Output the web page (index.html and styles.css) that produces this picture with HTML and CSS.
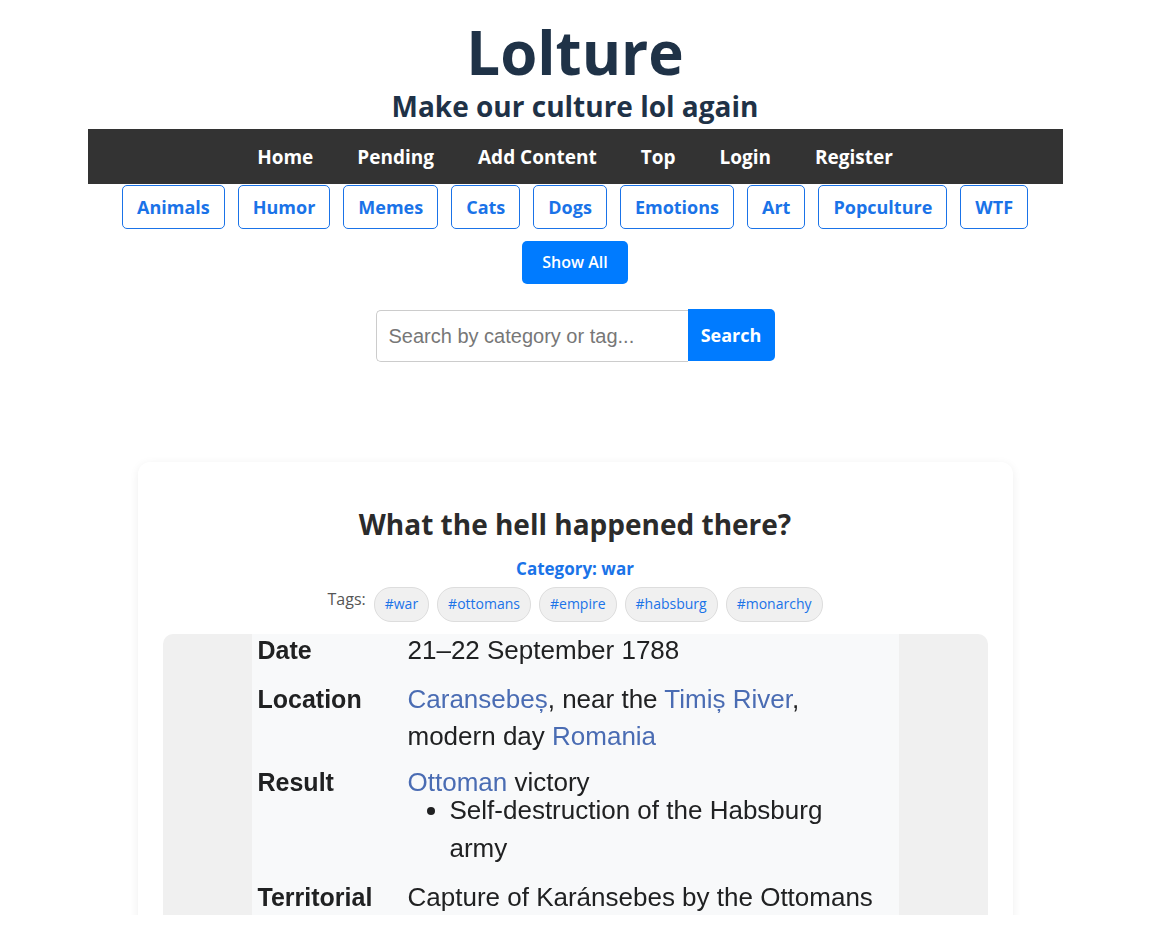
FILE: index.html
```html
<!DOCTYPE html>
<html lang="en">
<head>
<meta charset="utf-8">
<title>Lolture</title>
<link rel="stylesheet" href="styles.css">
</head>
<body>
<div class="page">
  <header class="site-header">
    <h1 class="logo">Lolture</h1>
    <h2 class="tagline">Make our culture lol again</h2>
  </header>
  <nav class="main-nav">
    <a href="#">Home</a>
    <a href="#">Pending</a>
    <a href="#">Add Content</a>
    <a href="#">Top</a>
    <a href="#">Login</a>
    <a href="#">Register</a>
  </nav>
  <div class="categories">
    <a class="cat-btn" href="#">Animals</a>
    <a class="cat-btn" href="#">Humor</a>
    <a class="cat-btn" href="#">Memes</a>
    <a class="cat-btn" href="#">Cats</a>
    <a class="cat-btn" href="#">Dogs</a>
    <a class="cat-btn" href="#">Emotions</a>
    <a class="cat-btn" href="#">Art</a>
    <a class="cat-btn" href="#">Popculture</a>
    <a class="cat-btn" href="#">WTF</a>
  </div>
  <div class="show-all-row">
    <a class="show-all" href="#">Show All</a>
  </div>
  <form class="search">
    <input class="search-input" type="text" placeholder="Search by category or tag...">
    <button class="search-btn" type="button">Search</button>
  </form>

  <article class="card">
    <h3 class="card-title">What the hell happened there?</h3>
    <a class="card-category" href="#">Category: war</a>
    <div class="tags">
      <span class="tags-label">Tags:</span>
      <a class="tag" href="#">#war</a>
      <a class="tag" href="#">#ottomans</a>
      <a class="tag" href="#">#empire</a>
      <a class="tag" href="#">#habsburg</a>
      <a class="tag" href="#">#monarchy</a>
    </div>
    <div class="media">
      <div class="infobox">
        <div class="ib-row ib-date">
          <div class="ib-label">Date</div>
          <div class="ib-value">21–22 September 1788</div>
        </div>
        <div class="ib-row ib-location">
          <div class="ib-label">Location</div>
          <div class="ib-value"><div class="ib-line"><span class="wl">Caransebeș</span><span>, near the </span><span class="wl">Timiș River</span><span>,</span></div><div class="ib-line"><span>modern day </span><span class="wl">Romania</span></div></div>
        </div>
        <div class="ib-row ib-resultrow">
          <div class="ib-label">Result</div>
          <div class="ib-value"><div class="ib-result"><span class="wl">Ottoman</span><span> victory</span></div>
            <ul class="ib-list"><li><div class="li-first">Self-destruction of the Habsburg</div><div class="li-second">army</div></li></ul>
          </div>
        </div>
        <div class="ib-row ib-territorial">
          <div class="ib-label">Territorial</div>
          <div class="ib-value">Capture of Karánsebes by the Ottomans</div>
        </div>
      </div>
    </div>
  </article>
</div>
</body>
</html>
```

FILE: styles.css
```css
* { box-sizing: border-box; }

html, body {
  margin: 0;
  padding: 0;
  background: #ffffff;
}

body {
  font-family: "Open Sans", "Noto Sans", "DejaVu Sans", sans-serif;
  color: #333333;
}

.page {
  width: 1150px;
  height: 915px;
  overflow: hidden;
}

.site-header {
  text-align: center;
  color: #1f3247;
  padding-top: 16px;
}

.logo {
  margin: 0;
  font-size: 60px;
  line-height: 72px;
  font-weight: 700;
}

.tagline {
  margin: 0;
  font-size: 28px;
  line-height: 36px;
  font-weight: 700;
  padding-bottom: 5px;
}

.main-nav {
  width: 975px;
  margin: 0 auto;
  height: 55px;
  background: #333333;
  display: flex;
  justify-content: center;
  align-items: center;
}

.main-nav a {
  color: #ffffff;
  text-decoration: none;
  font-weight: 700;
  font-size: 19px;
  padding: 0 22px;
}

.categories {
  display: flex;
  justify-content: center;
  gap: 13px;
  margin-top: 1px;
}

.cat-btn {
  display: block;
  border: 1px solid #1a73e8;
  border-radius: 5px;
  color: #1a73e8;
  background: #ffffff;
  text-decoration: none;
  font-weight: 700;
  font-size: 18px;
  line-height: 24px;
  padding: 9px 14px;
}

.show-all-row {
  display: flex;
  justify-content: center;
  margin-top: 12px;
}

.show-all {
  display: block;
  background: #007bff;
  color: #ffffff;
  text-decoration: none;
  font-weight: 600;
  font-size: 16px;
  line-height: 23px;
  height: 43px;
  padding: 10px 20px;
  border-radius: 5px;
}

.search {
  display: flex;
  justify-content: center;
  align-items: flex-start;
  margin-top: 25px;
}

.search-input {
  width: 312px;
  height: 52px;
  margin-top: 1px;
  border: 1px solid #cccccc;
  border-right: none;
  border-radius: 5px 0 0 5px;
  padding: 0 12px;
  font-family: "Liberation Sans", Arial, sans-serif;
  font-size: 20px;
  color: #333;
  outline: none;
}

.search-input::placeholder {
  color: #777777;
}

.search-btn {
  width: 87px;
  height: 52px;
  border: none;
  background: #007bff;
  color: #ffffff;
  font-family: "Open Sans", "Noto Sans", sans-serif;
  font-weight: 700;
  font-size: 18px;
  border-radius: 0 5px 5px 0;
  padding: 0;
}

.card {
  width: 875px;
  margin: 100px auto 0;
  background: #ffffff;
  border-radius: 12px;
  box-shadow: 0 2px 10px rgba(0, 0, 0, 0.07);
  padding: 42px 25px 0;
  text-align: center;
}

.card-title {
  margin: 0;
  font-size: 28px;
  line-height: 40px;
  font-weight: 700;
  color: #2b2b2b;
}

.card-category {
  display: block;
  margin-top: 14px;
  color: #1a73e8;
  text-decoration: none;
  font-weight: 700;
  font-size: 17px;
  line-height: 22px;
}

.tags {
  display: flex;
  justify-content: center;
  align-items: flex-start;
  gap: 8px;
  margin-top: 7px;
}

.tags-label {
  font-size: 16px;
  line-height: 22px;
  color: #555555;
  margin-top: 1px;
}

.tag {
  display: block;
  background: #f0f0f0;
  border: 1px solid #dddddd;
  border-radius: 17px;
  color: #1a73e8;
  text-decoration: none;
  font-size: 14px;
  line-height: 20px;
  padding: 6px 10px 7px;
}

.media {
  margin-top: 12px;
  background: #f0f0f0;
  border-radius: 10px 10px 0 0;
  height: 300px;
  display: flex;
  justify-content: center;
}

.infobox {
  width: 647px;
  background: #f8f9fa;
  text-align: left;
  font-family: "Liberation Sans", Arial, sans-serif;
  color: #202122;
  padding: 0 6px;
  filter: blur(0.3px);
}

.ib-row {
  display: flex;
}

.ib-label {
  width: 150px;
  flex: none;
  font-weight: 700;
  font-size: 25px;
}

.ib-value {
  width: 470px;
  font-size: 26px;
}

.ib-date .ib-label,
.ib-date .ib-value {
  line-height: 32px;
}

.ib-location {
  margin-top: 15px;
}

.ib-location .ib-label,
.ib-location .ib-value {
  line-height: 37px;
}

.ib-resultrow {
  margin-top: 8px;
}

.ib-resultrow .ib-label {
  line-height: 38px;
}

.ib-result {
  line-height: 26px;
  padding-top: 6px;
}

.ib-list {
  margin: 0;
  padding-left: 42px;
}

.li-first {
  line-height: 28px;
}

.li-second {
  line-height: 39px;
  margin-top: 5px;
}

.ib-territorial {
  margin-top: 10px;
}

.ib-territorial .ib-label,
.ib-territorial .ib-value {
  line-height: 38px;
}

.wl {
  color: #4a6cb3;
}
```
